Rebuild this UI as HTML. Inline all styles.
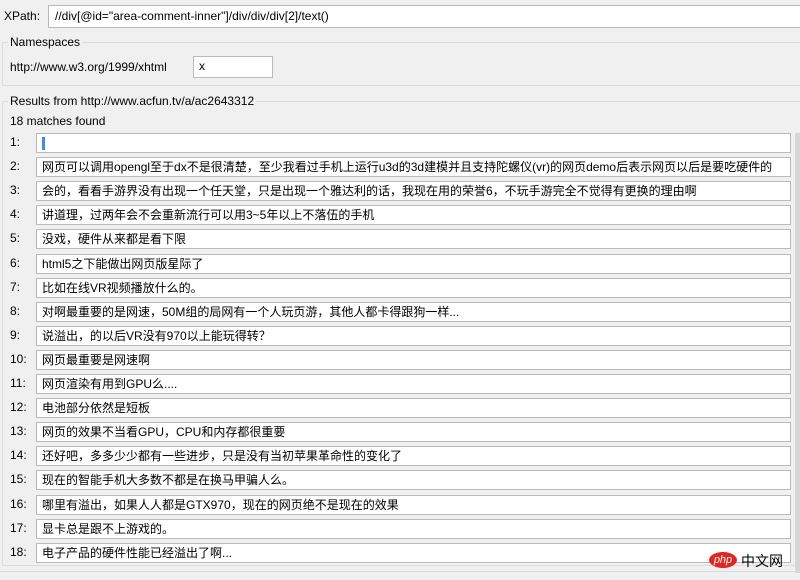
<!DOCTYPE html>
<html><head><meta charset="utf-8"><style>
*{margin:0;padding:0;box-sizing:border-box}
body{width:800px;height:580px;background:#f0f0f0;font-family:"Liberation Sans","Noto Sans CJK SC",sans-serif;font-size:12px;color:#000;position:relative;overflow:hidden}
.a{position:absolute;white-space:nowrap}
.box{position:absolute;background:#fff;border:1px solid #b9b9b9;height:20px;line-height:18px;padding-left:5px}
.grp{position:absolute;border:1px solid #dcdcdc;border-radius:2px}
.lbl{position:absolute;left:10px;width:22px}
</style></head><body>
<div class="a" style="left:4px;top:9px">XPath:</div>
<div class="box" style="left:48px;top:5px;width:760px;height:23px;line-height:21px;padding-left:6px">//div[@id="area-comment-inner"]/div/div/div[2]/text()</div>
<div class="grp" style="left:2px;top:42px;width:810px;height:44px"></div>
<div class="a" style="left:8px;top:35px;background:#f0f0f0;padding:0 2px">Namespaces</div>
<div class="a" style="left:10px;top:60px">http://www.w3.org/1999/xhtml</div>
<div class="box" style="left:193px;top:56px;width:80px;height:22px">x</div>
<div class="grp" style="left:2px;top:101px;width:810px;height:465px"></div>
<div class="a" style="left:8px;top:94px;background:#f0f0f0;padding:0 2px">Results from http://www.acfun.tv/a/ac2643312</div>
<div class="a" style="left:10px;top:114px">18 matches found</div>
<div style="position:absolute;left:795px;top:133px;width:5px;height:440px;background:#d6d6d6"></div>
<div id="rows"></div>
<div class="a" style="left:0;top:571px;width:800px;height:1px;background:#dadada"></div>
<div class="a" style="left:709px;top:552px;width:28px;height:16px;background:#e0261e;border-radius:50%;color:#fff;font-size:11px;line-height:16px;text-align:center;font-style:italic">php</div>
<div class="a" style="left:741px;top:551px;font-size:14px;font-family:'Noto Sans CJK SC',sans-serif">中文网</div>
<script>
var t=["","网页可以调用opengl至于dx不是很清楚，至少我看过手机上运行u3d的3d建模并且支持陀螺仪(vr)的网页demo后表示网页以后是要吃硬件的","会的，看看手游界没有出现一个任天堂，只是出现一个雅达利的话，我现在用的荣誉6，不玩手游完全不觉得有更换的理由啊","讲道理，过两年会不会重新流行可以用3~5年以上不落伍的手机","没戏，硬件从来都是看下限","html5之下能做出网页版星际了","比如在线VR视频播放什么的。","对啊最重要的是网速，50M组的局网有一个人玩页游，其他人都卡得跟狗一样...","说溢出，的以后VR没有970以上能玩得转？","网页最重要是网速啊","网页渲染有用到GPU么....","电池部分依然是短板","网页的效果不当看GPU，CPU和内存都很重要","还好吧，多多少少都有一些进步，只是没有当初苹果革命性的变化了","现在的智能手机大多数不都是在换马甲骗人么。","哪里有溢出，如果人人都是GTX970，现在的网页绝不是现在的效果","显卡总是跟不上游戏的。","电子产品的硬件性能已经溢出了啊..."];
var h="";for(var i=0;i<18;i++){var y=Math.round(133+i*24.1);
h+='<div class="lbl a" style="top:'+(y+2)+'px">'+(i+1)+':</div><div class="box" style="left:36px;top:'+y+'px;width:755px;font-size:12px">'+(i==0?'<span style="display:inline-block;width:3px;height:13px;background:#3c8ee8;vertical-align:middle"></span>':t[i])+'</div>';}
document.getElementById("rows").innerHTML=h;
</script>
</body></html>
